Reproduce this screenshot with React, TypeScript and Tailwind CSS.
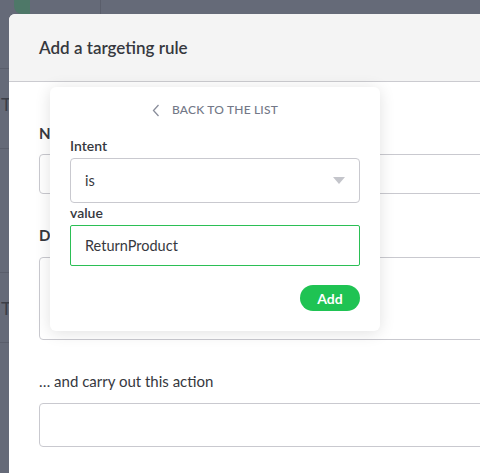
import React from 'react';

const font = { fontFamily: 'Lato, "Open Sans", sans-serif' };

export default function App() {
  return (
    <div className="relative w-[480px] h-[473px] overflow-hidden bg-[#656a78] flex" style={font}>
      {/* page behind the overlay: bits peeking above the modal */}
      <div className="absolute left-[14px] top-0 w-[16px] h-[14px] bg-[#4e7868] rounded-bl-[8px]" />
      <div className="absolute left-[100px] top-0 w-px h-[14px] bg-[#5a5e6b]" />

      {/* left strip */}
      <div className="w-[9px] shrink-0 flex flex-col pt-[68px]">
        <div className="h-[80px] border-t border-[#5a5e6b] text-[18px] leading-[70px] pl-[1px] text-[#3b3e47]">T</div>
        <div className="h-[124px] border-t border-[#5a5e6b]" />
        <div className="h-[70px] border-t border-[#5a5e6b] text-[18px] leading-[70px] pl-[1px] text-[#3b3e47]">T</div>
        <div className="border-t border-[#5a5e6b]" />
      </div>

      {/* modal */}
      <div className="relative mt-[14px] w-[520px] shrink-0 bg-white rounded-tl-[6px] overflow-hidden">
        <div className="h-[68px] bg-[#f4f4f4] border-b border-[#cbcbd0] flex items-center pl-[30px]">
          <h2 className="text-[17px] font-semibold text-[#36383e]">Add a targeting rule</h2>
        </div>
        <div className="pl-[30px] pt-[41px] flex flex-col w-[510px]">
          <div className="text-[15px] font-bold text-[#36383e] leading-[20px]">Name</div>
          <div className="mt-[11px] h-[40px] border border-[#c9c9cf] rounded-[4px]" />
          <div className="mt-[31px] text-[15px] font-bold text-[#36383e] leading-[20px]">Description</div>
          <div className="mt-[12px] h-[83px] border border-[#c9c9cf] rounded-[4px]" />
          <div className="mt-[31px] text-[15px] text-[#36383e] leading-[20px]">… and carry out this action</div>
          <div className="mt-[12px] h-[44px] border border-[#c9c9cf] rounded-[4px]" />
        </div>

        {/* popover over the form */}
        <div className="absolute left-[41px] top-[73px] w-[330px] h-[244px] bg-white rounded-[6px] shadow-[0_2px_16px_rgba(0,0,0,0.12)] px-[20px] pt-[14px] flex flex-col">
          <div className="flex items-center justify-center gap-[12px] text-[12px] text-[#737887] tracking-[0.2px] h-[18px]">
            <svg width="8" height="13" viewBox="0 0 8 13" fill="none">
              <path d="M6.5 1 L1.5 6.5 L6.5 12" stroke="#8a8e9b" strokeWidth="1.3" />
            </svg>
            <span className="font-medium">BACK TO THE LIST</span>
          </div>
          <div className="mt-[17px] text-[14px] font-semibold text-[#36383e] leading-[20px]">Intent</div>
          <div className="mt-[2px] h-[45px] border border-[#c9c9cf] rounded-[4px] flex items-center justify-between px-[14px]">
            <span className="text-[14.5px] text-[#36383e]">is</span>
            <svg width="12" height="7" viewBox="0 0 12 7">
              <path d="M0 0 H12 L6 7 Z" fill="#c4c5cb" />
            </svg>
          </div>
          <div className="text-[14px] font-semibold text-[#36383e] leading-[20px]">value</div>
          <div className="mt-[2px] h-[41px] border border-[#2bbf55] rounded-[2px] flex items-center pl-[14px]">
            <span className="text-[14.5px] text-[#36383e]">ReturnProduct</span>
          </div>
          <div className="mt-[19px] flex justify-end">
            <button className="h-[26px] w-[60px] rounded-full bg-[#1fc353] text-white text-[14px] font-bold">Add</button>
          </div>
        </div>
      </div>
    </div>
  );
}
